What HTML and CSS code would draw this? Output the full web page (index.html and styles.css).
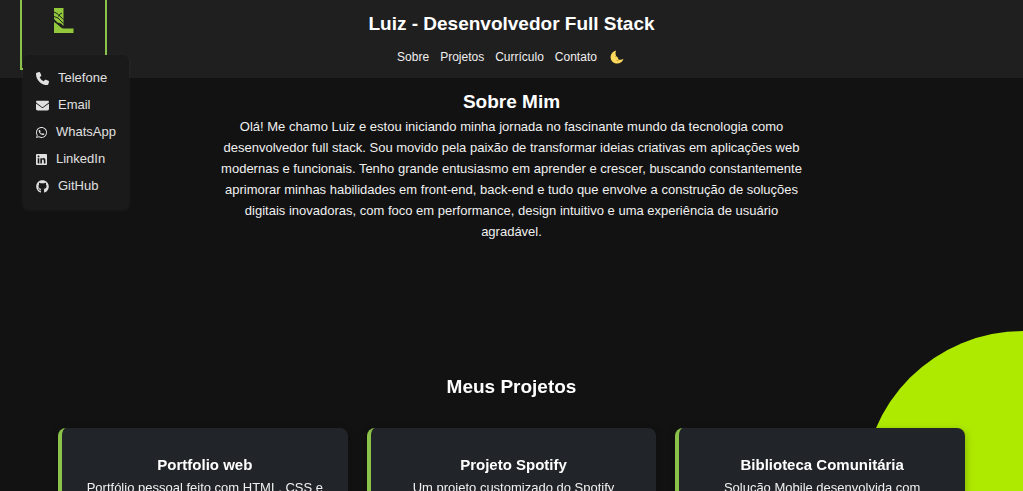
FILE: index.html
```
<!DOCTYPE html>
<html lang="pt-BR">
<head>
  <meta charset="UTF-8" />
  <meta name="viewport" content="width=device-width, initial-scale=1.0" />
  <title>Luiz - Desenvolvedor Full Stack</title>
  <link rel="stylesheet" href="styles.css">
</head>
<body>
  <div class="circulo"></div>

  <header>
    <div class="menu-contato">
      <a href="#" class="logo" aria-label="Início">
        <svg viewBox="0 0 20 25">
          <path d="M0 0H9.500V18L7 15.500L3.500 14.500L0 11ZM0 14L3 16L7 19.500L9 20.500H19.500V25H0Z" />
          <path class="corte" d="M0 4L3 5.500L9.500 11.500M0 8.500L4 10L9.500 15.500M4.500 8.500L5.500 6.500L8 5" />
        </svg>
      </a>
      <ul class="contatos">
        <li><a href="#telefone">
          <svg class="largo" viewBox="0 0 512 512"><path d="M164.900 24.600c-7.700-18.600-28-28.500-47.400-23.200l-88 24C12.100 30.200 0 46 0 64c0 247.400 200.600 448 448 448c18 0 33.800-12.100 38.600-29.500l24-88c5.300-19.400-4.600-39.700-23.200-47.400l-96-40c-16.300-6.800-35.200-2.100-46.300 11.600L304.700 368C234.300 334.700 177.300 277.700 144 207.300L193.300 167c13.700-11.200 18.400-30 11.600-46.300l-40-96z"/></svg>
          Telefone</a></li>
        <li><a href="#email">
          <svg class="largo" viewBox="0 0 512 512"><path d="M48 64C21.500 64 0 85.500 0 112c0 15.100 7.100 29.300 19.200 38.400L236.800 313.600c11.400 8.500 27 8.500 38.400 0L492.800 150.400c12.100-9.100 19.200-23.300 19.200-38.400c0-26.500-21.500-48-48-48H48zM0 176V384c0 35.300 28.700 64 64 64H448c35.300 0 64-28.700 64-64V176L294.400 339.200c-22.800 17.100-54 17.100-76.800 0L0 176z"/></svg>
          Email</a></li>
        <li><a href="#whatsapp">
          <svg viewBox="0 0 448 512"><path d="M380.900 97.100C339 55.100 283.200 32 223.900 32c-122.400 0-222 99.600-222 222 0 39.100 10.200 77.300 29.600 111L0 480l117.700-30.900c32.400 17.700 68.900 27 106.100 27h.1c122.300 0 224.100-99.600 224.100-222 0-59.300-25.200-115-67.100-157zm-157 341.600c-33.200 0-65.700-8.900-94-25.700l-6.700-4-69.800 18.300L72 359.200l-4.400-7c-18.500-29.400-28.200-63.300-28.200-98.200 0-101.700 82.800-184.500 184.600-184.500 49.300 0 95.600 19.200 130.400 54.100 34.800 34.900 56.200 81.200 56.100 130.500 0 101.800-84.900 184.600-186.600 184.600zm101.200-138.200c-5.500-2.800-32.800-16.200-37.900-18-5.100-1.900-8.800-2.800-12.500 2.800-3.700 5.600-14.300 18-17.600 21.800-3.200 3.700-6.500 4.200-12 1.400-32.600-16.300-54-29.100-75.500-66-5.700-9.800 5.700-9.100 16.300-30.300 1.800-3.700.9-6.900-.5-9.700-1.400-2.800-12.500-30.100-17.100-41.200-4.500-10.800-9.100-9.300-12.500-9.500-3.200-.2-6.900-.2-10.600-.2-3.700 0-9.700 1.400-14.800 6.900-5.100 5.600-19.400 19-19.400 46.300 0 27.300 19.900 53.700 22.600 57.400 2.800 3.700 39.100 59.700 94.800 83.800 35.200 15.200 49 16.500 66.600 13.900 10.700-1.600 32.800-13.400 37.400-26.400 4.600-13 4.600-24.100 3.200-26.400-1.300-2.500-5-3.900-10.500-6.600z"/></svg>
          WhatsApp</a></li>
        <li><a href="#linkedin">
          <svg viewBox="0 0 448 512"><path d="M416 32H31.900C14.300 32 0 46.500 0 64.300v383.400C0 465.500 14.300 480 31.900 480H416c17.600 0 32-14.500 32-32.300V64.300c0-17.800-14.400-32.300-32-32.300zM135.400 416H69V202.200h66.500V416zm-33.200-243c-21.300 0-38.500-17.300-38.500-38.500S80.900 96 102.200 96c21.200 0 38.500 17.300 38.500 38.500 0 21.300-17.200 38.500-38.500 38.500zm282.100 243h-66.400V312c0-24.800-.5-56.700-34.500-56.700-34.600 0-39.900 27-39.900 54.900V416h-66.400V202.200h63.700v29.200h.9c8.900-16.800 30.600-34.500 62.900-34.500 67.200 0 79.700 44.300 79.700 101.900V416z"/></svg>
          LinkedIn</a></li>
        <li><a href="#github">
          <svg class="largo" viewBox="0 0 496 512"><path d="M244.800 8C106.100 8 0 113.300 0 252c0 110.900 69.800 205.800 169.500 239.200 12.800 2.300 17.300-5.600 17.300-12.100 0-6.200-.3-40.400-.3-61.400 0 0-70 15-84.700-29.800 0 0-11.400-29.100-27.800-36.600 0 0-22.900-15.700 1.600-15.400 0 0 24.900 2 38.600 25.800 21.900 38.600 58.600 27.500 72.900 20.900 2.300-16 8.800-27.100 16-33.700-55.900-6.200-112.300-14.300-112.300-110.500 0-27.500 7.600-41.300 23.600-58.900-2.600-6.500-11.100-33.300 2.600-67.900 20.900-6.500 69 27 69 27 20-5.600 41.500-8.500 62.800-8.500s42.800 2.900 62.800 8.500c0 0 48.100-33.600 69-27 13.700 34.700 5.200 61.400 2.600 67.900 16 17.700 25.800 31.500 25.800 58.900 0 96.500-58.900 104.200-114.800 110.500 9.200 7.900 17 22.900 17 46.400 0 33.700-.3 75.400-.3 83.600 0 6.500 4.600 14.400 17.300 12.100C428.200 457.800 496 362.900 496 252 496 113.300 383.500 8 244.800 8z"/></svg>
          GitHub</a></li>
      </ul>
    </div>

    <h1>Luiz - Desenvolvedor Full Stack</h1>
    <nav>
      <a href="#sobre">Sobre</a>
      <a href="#projetos">Projetos</a>
      <a href="#curriculo">Currículo</a>
      <a href="#contato">Contato</a>
      <button type="button" class="tema" aria-label="Alternar tema">
        <svg viewBox="0 0 16 16">
          <path class="lua" d="M7 .5C3 1.500.7 4.700.7 8.300C.7 12.500 4 15.500 8 15.500C11.500 15.500 14.600 13.500 15.500 10C14 11.300 11.500 11.600 10 10.800L9 9.900L9.600 8.900L8.300 8.200C6 6 5.800 3 7 .5Z" />
          <path class="rosto" d="M6 7.500L7 8M7.500 11.800Q9 12.500 9.800 11.800" />
        </svg>
      </button>
    </nav>
  </header>

  <main>
    <section id="sobre" class="sobre">
      <h2>Sobre Mim</h2>
      <p>Olá! Me chamo Luiz e estou iniciando minha jornada no fascinante mundo da tecnologia como desenvolvedor full stack. Sou movido pela paixão de transformar ideias criativas em aplicações web modernas e funcionais. Tenho grande entusiasmo em aprender e crescer, buscando constantemente aprimorar minhas habilidades em front-end, back-end e tudo que envolve a construção de soluções digitais inovadoras, com foco em performance, design intuitivo e uma experiência de usuário agradável.</p>
    </section>

    <section id="projetos" class="projetos">
      <h2>Meus Projetos</h2>
      <div class="grade">
        <article class="card">
          <h3>Portfolio web</h3>
          <p>Portfólio pessoal feito com HTML, CSS e</p>
        </article>
        <article class="card">
          <h3>Projeto Spotify</h3>
          <p>Um projeto customizado do Spotify</p>
        </article>
        <article class="card">
          <h3>Biblioteca Comunitária</h3>
          <p>Solução Mobile desenvolvida com</p>
        </article>
      </div>
    </section>
  </main>
</body>
</html>
```
FILE: styles.css
```
* {
  box-sizing: border-box;
  margin: 0;
  padding: 0;
}

body {
  background-color: #121212;
  color: #ffffff;
  font-family: Arial, 'Liberation Sans', sans-serif;
  font-size: 13px;
  line-height: 20px;
  overflow-x: hidden;
}

a {
  color: inherit;
  text-decoration: none;
}

header {
  position: relative;
  z-index: 2;
  background-color: #1f1f1f;
  padding: 12px 0;
  text-align: center;
}

h1,
h2 {
  font-size: 19px;
  line-height: 24px;
}

nav {
  display: flex;
  justify-content: center;
  align-items: center;
  gap: 11px;
  margin-top: 12px;
  color: #f0f0f0;
  font-size: 12px;
  line-height: 18px;
}

.tema {
  display: flex;
  width: 18px;
  height: 18px;
  align-items: center;
  justify-content: center;
  background: none;
  border: none;
  cursor: pointer;
}

.tema svg {
  width: 14px;
  height: 14px;
}

.lua {
  fill: #fdd95c;
}

.rosto {
  fill: none;
  stroke: #b98b24;
}

/* logo com o menu de contatos aberto por cima */
.menu-contato {
  position: absolute;
  top: 0;
  left: 20px;
}

.logo {
  display: flex;
  justify-content: center;
  width: 87px;
  height: 70px;
  padding-top: 8px;
  border: 2px solid #8bc34a;
  border-top: none;
}

.logo svg {
  width: 20px;
  height: 25px;
  fill: #93c83d;
}

.logo .corte {
  fill: none;
  stroke: #1f1f1f;
}

.contatos {
  position: absolute;
  top: 55px;
  left: 3px;
  width: 106px;
  padding: 13px;
  list-style: none;
  background-color: #1a1a1a;
  border-radius: 6px;
  box-shadow: 0 1px 4px rgba(255, 255, 255, 0.06);
  text-align: left;
}

.contatos li + li {
  margin-top: 7px;
}

.contatos a {
  display: flex;
  align-items: center;
  gap: 9px;
  color: #e0e0e0;
}

.contatos svg {
  flex: none;
  width: 11px;
  height: 13px;
  fill: #e0e0e0;
}

.contatos svg.largo {
  width: 13px;
}

.sobre {
  max-width: 588px;
  min-height: 284px;
  margin: 0 auto;
  padding-top: 12px;
  text-align: center;
}

.sobre p {
  margin-top: 2px;
  line-height: 21px;
}

.projetos {
  position: relative;
  padding: 13px 58px 0;
  text-align: center;
}

.grade {
  display: grid;
  grid-template-columns: repeat(3, 1fr);
  gap: 19px;
  margin-top: 29px;
}

.card {
  padding: 26px 24px;
  background-color: #212529;
  border-left: 4px solid #8bc34a;
  border-radius: 8px;
  box-shadow: 0 3px 8px rgba(0, 0, 0, 0.3);
}

.card h3 {
  font-size: 15px;
  line-height: 22px;
}

.card p {
  margin-top: 2px;
}

.sobre p,
.card p {
  color: #f0f0f0;
}

.circulo {
  position: fixed;
  right: -160px;
  bottom: -160px;
  width: 320px;
  height: 320px;
  border-radius: 50%;
  background-color: #aeea00;
}
```
